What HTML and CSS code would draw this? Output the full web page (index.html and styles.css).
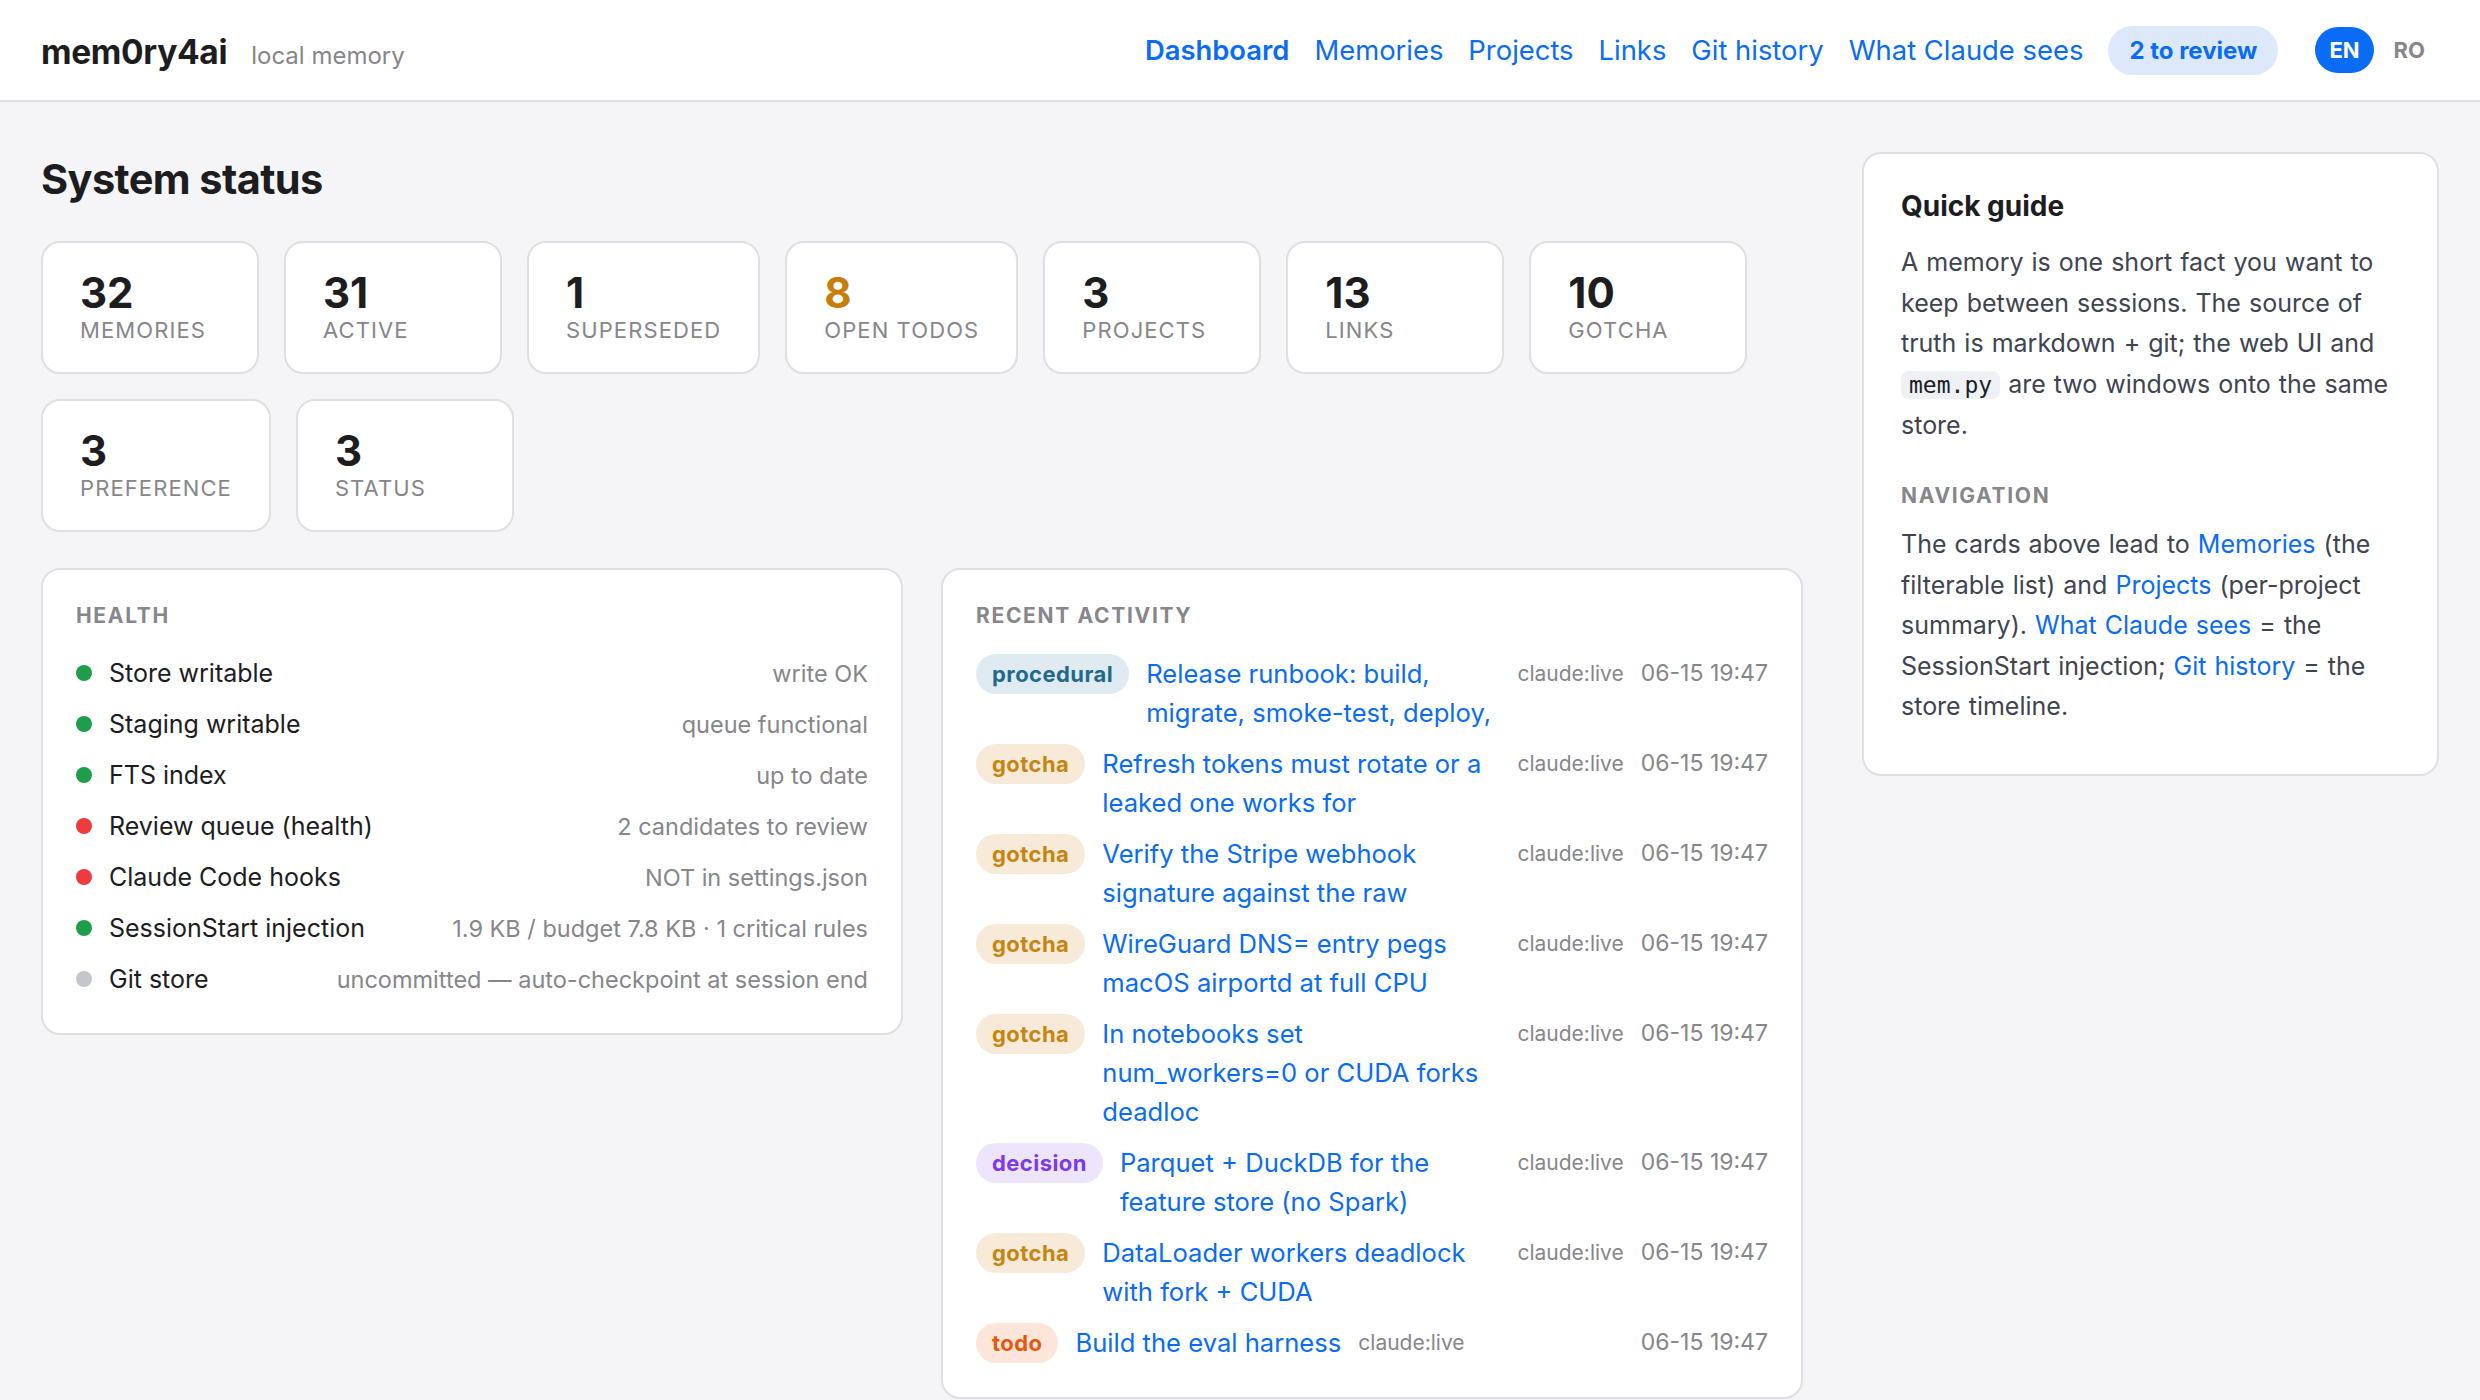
FILE: index.html
```html
<!DOCTYPE html>
<html lang="en">
<head>
    <meta charset="UTF-8">
    <meta name="viewport" content="width=device-width, initial-scale=1.0">
    <title>mem0ry4ai · Dashboard</title>
    <link rel="stylesheet" href="styles.css">
</head>
<body>
    <header class="topbar">
        <div class="brand">
            <span class="brand-name">mem0ry4ai</span>
            <span class="brand-sub">local memory</span>
        </div>
        <nav class="nav">
            <a href="#" class="nav-link active">Dashboard</a>
            <a href="#" class="nav-link">Memories</a>
            <a href="#" class="nav-link">Projects</a>
            <a href="#" class="nav-link">Links</a>
            <a href="#" class="nav-link">Git history</a>
            <a href="#" class="nav-link">What Claude sees</a>
            <a href="#" class="review-pill">2 to review</a>
            <div class="lang">
                <a href="#" class="lang-btn on">EN</a>
                <a href="#" class="lang-btn">RO</a>
            </div>
        </nav>
    </header>

    <div class="page">
        <main class="main">
            <h1>System status</h1>

            <div class="stats">
                <a href="#" class="stat"><span class="stat-num">32</span><span class="stat-label">Memories</span></a>
                <a href="#" class="stat"><span class="stat-num">31</span><span class="stat-label">Active</span></a>
                <a href="#" class="stat"><span class="stat-num">1</span><span class="stat-label">Superseded</span></a>
                <a href="#" class="stat"><span class="stat-num warn">8</span><span class="stat-label">Open todos</span></a>
                <a href="#" class="stat"><span class="stat-num">3</span><span class="stat-label">Projects</span></a>
                <a href="#" class="stat"><span class="stat-num">13</span><span class="stat-label">Links</span></a>
                <a href="#" class="stat"><span class="stat-num">10</span><span class="stat-label">Gotcha</span></a>
                <a href="#" class="stat"><span class="stat-num">3</span><span class="stat-label">Preference</span></a>
                <a href="#" class="stat"><span class="stat-num">3</span><span class="stat-label">Status</span></a>
            </div>

            <div class="panels">
                <section class="panel">
                    <h2 class="section-label">Health</h2>
                    <ul class="health">
                        <li><span class="dot ok"></span><span class="h-name">Store writable</span><span class="h-note">write OK</span></li>
                        <li><span class="dot ok"></span><span class="h-name">Staging writable</span><span class="h-note">queue functional</span></li>
                        <li><span class="dot ok"></span><span class="h-name">FTS index</span><span class="h-note">up to date</span></li>
                        <li><span class="dot bad"></span><span class="h-name">Review queue (health)</span><span class="h-note">2 candidates to review</span></li>
                        <li><span class="dot bad"></span><span class="h-name">Claude Code hooks</span><span class="h-note">NOT in settings.json</span></li>
                        <li><span class="dot ok"></span><span class="h-name">SessionStart injection</span><span class="h-note">1.9 KB / budget 7.8 KB · 1 critical rules</span></li>
                        <li><span class="dot idle"></span><span class="h-name">Git store</span><span class="h-note">uncommitted — auto-checkpoint at session end</span></li>
                    </ul>
                </section>

                <section class="panel panel-activity">
                    <h2 class="section-label">Recent activity</h2>
                    <ul class="activity">
                        <li><span class="badge procedural">procedural</span><a href="#" class="act-title">Release runbook: build, migrate, smoke-test, deploy,</a><span class="act-src">claude:live</span><span class="act-date">06-15 19:47</span></li>
                        <li><span class="badge gotcha">gotcha</span><a href="#" class="act-title">Refresh tokens must rotate or a leaked one works for</a><span class="act-src">claude:live</span><span class="act-date">06-15 19:47</span></li>
                        <li><span class="badge gotcha">gotcha</span><a href="#" class="act-title">Verify the Stripe webhook signature against the raw</a><span class="act-src">claude:live</span><span class="act-date">06-15 19:47</span></li>
                        <li><span class="badge gotcha">gotcha</span><a href="#" class="act-title">WireGuard DNS= entry pegs macOS airportd at full CPU</a><span class="act-src">claude:live</span><span class="act-date">06-15 19:47</span></li>
                        <li><span class="badge gotcha">gotcha</span><a href="#" class="act-title">In notebooks set num_workers=0 or CUDA forks deadloc</a><span class="act-src">claude:live</span><span class="act-date">06-15 19:47</span></li>
                        <li><span class="badge decision">decision</span><a href="#" class="act-title">Parquet + DuckDB for the feature store (no Spark)</a><span class="act-src">claude:live</span><span class="act-date">06-15 19:47</span></li>
                        <li><span class="badge gotcha">gotcha</span><a href="#" class="act-title">DataLoader workers deadlock with fork + CUDA</a><span class="act-src">claude:live</span><span class="act-date">06-15 19:47</span></li>
                        <li><span class="badge todo">todo</span><a href="#" class="act-title">Build the eval harness</a><span class="act-src">claude:live</span><span class="act-date">06-15 19:47</span></li>
                    </ul>
                </section>
            </div>
        </main>

        <aside class="guide">
            <h3>Quick guide</h3>
            <p>A memory is one short fact you want to keep between sessions. The source of truth is markdown + git; the web UI and <code>mem.py</code> are two windows onto the same store.</p>
            <h4 class="section-label">Navigation</h4>
            <p>The cards above lead to <a href="#">Memories</a> (the filterable list) and <a href="#">Projects</a> (per-project summary). <a href="#">What Claude sees</a> = the SessionStart injection; <a href="#">Git history</a> = the store timeline.</p>
        </aside>
    </div>
</body>
</html>
```
FILE: styles.css
```css
* {
    box-sizing: border-box;
}
body {
    margin: 0;
    font-family: Inter, "Noto Sans", "Liberation Sans", sans-serif;
    background-color: #f5f5f7;
    color: #1d1d1f;
}
a {
    color: #0a6cf5;
    text-decoration: none;
}
ul {
    list-style: none;
    margin: 0;
    padding: 0;
}

/* top bar */
.topbar {
    height: 102px;
    display: flex;
    align-items: center;
    justify-content: space-between;
    padding: 0 41px;
    background-color: #ffffff;
    border-bottom: 2px solid #dedee3;
}
.brand {
    display: flex;
    align-items: baseline;
    gap: 24px;
    padding-top: 4px;
}
.brand-name {
    font-size: 33.5px;
    font-weight: 700;
    letter-spacing: -0.01em;
}
.brand-sub {
    font-size: 24px;
    color: #86868b;
}
.nav {
    display: flex;
    align-items: center;
    gap: 25px;
}
.nav-link {
    font-size: 27.4px;
}
.nav-link.active {
    font-weight: 600;
}
.review-pill {
    font-size: 24px;
    font-weight: 700;
    padding: 0 21px;
    height: 49px;
    line-height: 49px;
    border-radius: 25px;
    background-color: #dde9fb;
}
.lang {
    display: flex;
    gap: 6px;
    margin-left: 12px;
}
.lang-btn {
    font-size: 22px;
    font-weight: 700;
    color: #86868b;
    height: 46px;
    line-height: 46px;
    padding: 0 14px;
    border-radius: 23px;
}
.lang-btn.on {
    color: #ffffff;
    background-color: #0a6cf5;
}

/* page layout */
.page {
    display: grid;
    grid-template-columns: 1fr 577px;
    gap: 59px;
    align-items: start;
    padding: 50px 41px 40px;
}
h1 {
    font-size: 41.5px;
    font-weight: 700;
    letter-spacing: -0.015em;
    line-height: 1.2;
    margin: 0 0 36px;
    padding-top: 3px;
}

/* stat cards */
.stats {
    display: flex;
    flex-wrap: wrap;
    gap: 25px;
}
.stat {
    display: flex;
    flex-direction: column;
    min-width: 218px;
    padding: 27px 37px;
    background-color: #ffffff;
    border: 2px solid #dedee3;
    border-radius: 19px;
    color: #1d1d1f;
}
.stat-num {
    font-size: 42px;
    font-weight: 700;
    line-height: 46px;
}
.stat-num.warn {
    color: #c97d06;
}
.stat-label {
    font-size: 22px;
    line-height: 29px;
    letter-spacing: 0.05em;
    text-transform: uppercase;
    color: #86868b;
}

/* panels */
.panels {
    display: grid;
    grid-template-columns: 1fr 1fr;
    gap: 38px;
    align-items: start;
    margin-top: 36px;
}
.panel {
    background-color: #ffffff;
    border: 2px solid #dedee3;
    border-radius: 19px;
    padding: 33px 33px 28px;
}
.panel-activity {
    padding-bottom: 34px;
}
.section-label {
    margin: 0;
    font-size: 21px;
    line-height: 25px;
    font-weight: 700;
    letter-spacing: 0.08em;
    text-transform: uppercase;
    color: #86868b;
}
.health {
    margin-top: 20px;
}
.health li {
    display: flex;
    align-items: center;
    min-height: 51px;
    font-size: 25px;
}
.dot {
    width: 16px;
    height: 16px;
    border-radius: 50%;
    margin-right: 17px;
    flex: none;
}
.dot.ok {
    background-color: #1e9e4a;
}
.dot.bad {
    background-color: #ee3b3f;
}
.dot.idle {
    background-color: #c4c6cc;
}
.h-note {
    margin-left: auto;
    font-size: 23.5px;
    color: #86868b;
    white-space: nowrap;
}

.activity {
    margin-top: 26px;
    display: flex;
    flex-direction: column;
    gap: 12px;
}
.activity li {
    display: flex;
    align-items: flex-start;
    gap: 17px;
}
.badge {
    flex: none;
    height: 40px;
    line-height: 40px;
    padding: 0 16px;
    border-radius: 20px;
    font-size: 22px;
    font-weight: 700;
    letter-spacing: 0.02em;
}
.badge.procedural {
    color: #1f6a8c;
    background-color: #dfeaf1;
}
.badge.gotcha {
    color: #c78510;
    background-color: #f7ead9;
}
.badge.decision {
    color: #7c3aed;
    background-color: #ede5fb;
}
.badge.todo {
    color: #e5580f;
    background-color: #fde5da;
}
.act-title {
    flex: 0 1 auto;
    font-size: 25.6px;
    line-height: 39px;
}
.act-src {
    flex: none;
    font-size: 21px;
    line-height: 39px;
    color: #86868b;
}
.act-date {
    flex: none;
    margin-left: auto;
    font-size: 23px;
    line-height: 39px;
    color: #86868b;
}

/* quick guide */
.guide {
    background-color: #ffffff;
    border: 2px solid #dedee3;
    border-radius: 19px;
    padding: 34px 37px 35px;
}
.guide h3 {
    margin: 0 0 18px;
    font-size: 28px;
    line-height: 36px;
    font-weight: 700;
}
.guide p {
    margin: 0 0 12px;
    font-size: 25px;
    line-height: 40.6px;
    color: #3f4451;
    word-spacing: 0.04em;
}
.guide h4 {
    margin: 37px 0 16px;
}
.guide code {
    font-family: "DejaVu Sans Mono", "Liberation Mono", monospace;
    font-size: 23px;
    padding: 1px 8px;
    border-radius: 8px;
    background-color: #eef0f3;
    color: #1d1d1f;
}
```
